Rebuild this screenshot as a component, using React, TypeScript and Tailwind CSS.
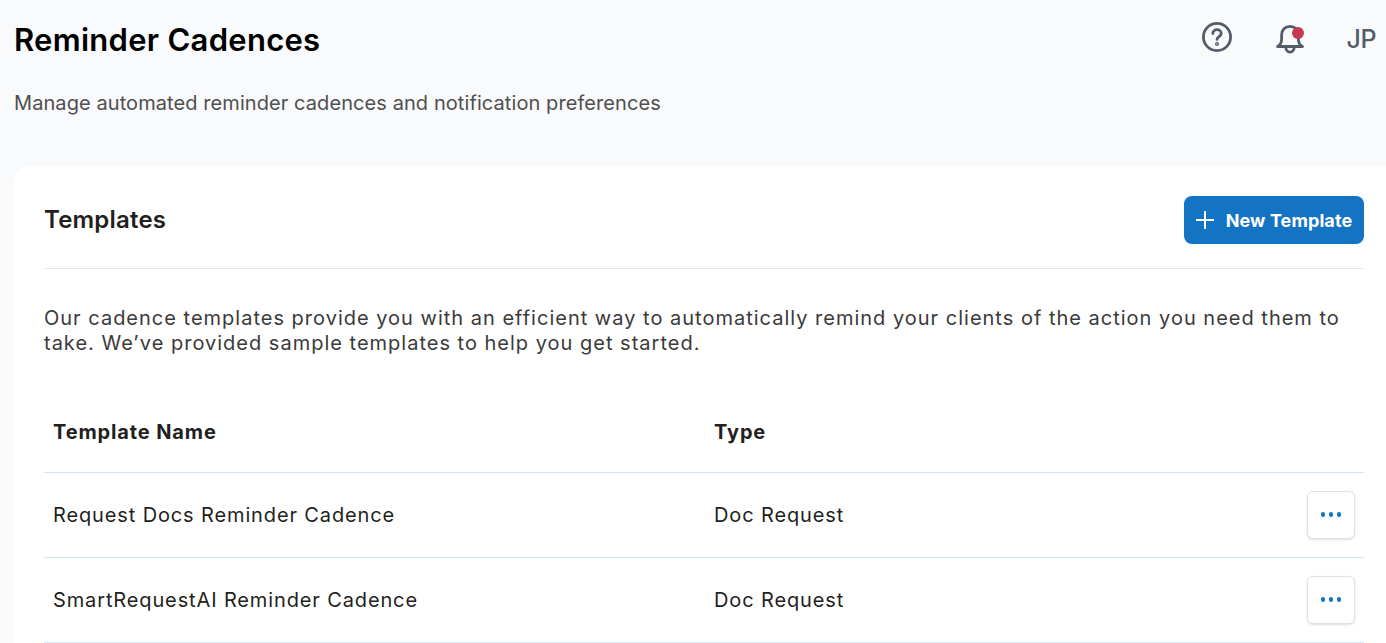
const ROWS = [
  { name: "Request Docs Reminder Cadence", type: "Doc Request" },
  { name: "SmartRequestAI Reminder Cadence", type: "Doc Request" },
];

function QuestionIcon() {
  return (
    <svg width="32" height="32" viewBox="0 0 32 32" fill="none" stroke="#535c69" strokeWidth="2.8" strokeLinecap="round" strokeLinejoin="round">
      <circle cx="16" cy="16" r="13.6" />
      <path d="M11.8 12.6c0-2.4 1.9-4 4.2-4s4.2 1.6 4.2 3.800c0 3.200-4.200 3.200-4.200 6" />
      <circle cx="16" cy="23" r="0.6" fill="#535c69" />
    </svg>
  );
}

function BellIcon() {
  return (
    <div className="relative h-9 w-8">
      <svg width="32" height="36" viewBox="0 0 32 36" fill="none" stroke="#535c69" strokeWidth="2.8" strokeLinecap="round" strokeLinejoin="round">
        <path d="M3.500 25.500c2.800-1.500 4.100-3.500 4.100-7V14c0-5 3.600-8.700 8.400-8.700s8.400 3.700 8.400 8.700v4.500c0 3.500 1.300 5.500 4.100 7z" />
        <path d="M11.800 26c0 3 1.800 5.200 4.200 5.200s4.200-2.200 4.200-5.200" />
      </svg>
      <span className="absolute right-[1.500px] top-[6px] h-3 w-3 rounded-full bg-[#c63a55]" />
    </div>
  );
}

export default function App() {
  return (
    <div className="h-[643px] overflow-hidden bg-[#f9fafc] pl-[14px] font-['Inter',sans-serif]">
      <header className="flex items-start justify-between pt-[21px]">
        <div>
          <h1 className="text-[31px] font-semibold leading-[38px] tracking-[0.28px] text-black">Reminder Cadences</h1>
          <p className="mt-[31px] text-[20px] leading-[26px] tracking-[0.08px] text-[#4f4f4f]">
            Manage automated reminder cadences and notification preferences
          </p>
        </div>
        <div className="flex items-start gap-[41px] pr-[10px]">
          <QuestionIcon />
          <BellIcon />
          <span className="text-[25px] font-medium leading-[36px] tracking-[-0.5px] text-[#535c69]">JP</span>
        </div>
      </header>

      <main className="mt-[51px] rounded-tl-[14px] bg-white pl-[30px] pr-[22px]">
        <div className="flex items-center justify-between border-b border-[#e8e8e8] pb-6 pt-[29px]">
          <h2 className="text-[24px] font-semibold tracking-[0.2px] text-[#231f20]">Templates</h2>
          <button className="flex h-12 w-[180px] items-center justify-center gap-3 rounded-lg bg-[#1474c4] text-[18px] font-bold tracking-[0.1px] text-white">
            <svg width="18" height="18" viewBox="0 0 18 18" stroke="white" strokeWidth="2">
              <path d="M9 0v18M0 9h18" />
            </svg>
            New Template
          </button>
        </div>

        <p className="mt-[37px] text-[20px] leading-[25px] tracking-[1px] text-[#3a3a3a]">
          Our cadence templates provide you with an efficient way to automatically remind your clients of the action you need them to take. We’ve provided sample templates to help you get started.
        </p>

        <table className="mt-[36px] w-full border-collapse text-[20px] tracking-[0.87px] text-[#231f20]">
          <thead>
            <tr className="h-[80px] border-b border-[#d2e8fa] text-left font-bold">
              <th className="w-[670px] pl-[9px]">Template Name</th>
              <th>Type</th>
              <th />
            </tr>
          </thead>
          <tbody>
            {ROWS.map((row) => (
              <tr key={row.name} className="h-[85px] border-b border-[#d2e8fa]">
                <td className="pl-[9px]">{row.name}</td>
                <td>{row.type}</td>
                <td className="pr-[9px] text-right">
                  <button className="inline-flex h-12 w-12 items-center justify-center gap-[3.500px] rounded-md border border-[#e2e2e2] bg-white shadow-sm">
                    <span className="h-[4.500px] w-[4.500px] rounded-full bg-[#1474c4]" />
                    <span className="h-[4.500px] w-[4.500px] rounded-full bg-[#1474c4]" />
                    <span className="h-[4.500px] w-[4.500px] rounded-full bg-[#1474c4]" />
                  </button>
                </td>
              </tr>
            ))}
          </tbody>
        </table>
      </main>
    </div>
  );
}
